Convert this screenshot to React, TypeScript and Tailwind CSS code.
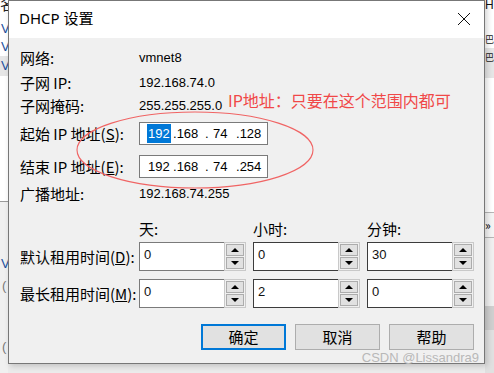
const latin = "font-['Liberation_Sans','Noto_Sans_CJK_SC',sans-serif]"

function Arrow({ up }: { up?: boolean }) {
  return (
    <div className="flex-1 border border-[#acacac] bg-[#e1e1e1] flex items-center justify-center">
      {up ? (
        <div className="w-0 h-0 border-x-[4px] border-x-transparent border-b-[4px] border-b-black" />
      ) : (
        <div className="w-0 h-0 border-x-[4px] border-x-transparent border-t-[4px] border-t-black" />
      )}
    </div>
  )
}

function Spin({ value, dark }: { value: string; dark?: boolean }) {
  return (
    <div className="flex h-[29px] w-[107px]">
      <div
        className={`flex-1 bg-white border pl-[4px] pt-[4px] text-[13px] leading-[16px] text-[#111] ${latin} ${
          dark ? 'border-[#3c3c3c]' : 'border-[#7a7a7a]'
        }`}
      >
        {value}
      </div>
      <div className="w-[22px] -ml-px border border-[#c9c9c9] bg-[#f0f0f0] p-px flex flex-col gap-px">
        <Arrow up />
        <Arrow />
      </div>
    </div>
  )
}

function Row({ label, children, className }: { label: React.ReactNode; children: React.ReactNode; className: string }) {
  return (
    <div className={`flex items-center ${className}`}>
      <div className="w-[119px] shrink-0 text-[15px] leading-[20px] whitespace-nowrap">{label}</div>
      {children}
    </div>
  )
}

function Value({ children }: { children: React.ReactNode }) {
  return <div className={`text-[13px] ${latin}`}>{children}</div>
}

function IpBox({ parts, selected }: { parts: string[]; selected?: boolean }) {
  return (
    <div className={`w-[129px] h-[23px] bg-white border border-[#7a7a7a] flex items-center pl-[7px] text-[13px] ${latin}`}>
      <span className="w-[23px] flex items-center">
        <span className={selected ? 'bg-[#0078d7] text-white pl-px pr-[1px]' : 'pl-px'}>{parts[0]}</span>
        {selected && <span className="w-px h-[17px] bg-[#f08020]" />}
      </span>
      <span className="w-[35px] pl-[3px]">.{parts[1]}</span>
      <span className="w-[8px]">.</span>
      <span className="w-[22px]">{parts[2]}</span>
      <span className="w-[30px] pl-px">.{parts[3]}</span>
    </div>
  )
}

function Btn({ children, primary }: { children: React.ReactNode; primary?: boolean }) {
  return (
    <div
      className={`w-[85px] h-[26px] bg-[#e1e1e1] flex items-center justify-center text-[15px] ${
        primary ? 'border-2 border-[#0078d7]' : 'border border-[#adadad]'
      }`}
    >
      {children}
    </div>
  )
}

function Backdrop() {
  return (
    <div className="flex h-full text-[15px] leading-[19px]">
      <div className="w-[8px] overflow-hidden flex flex-col bg-white">
        <div className="h-[12px] overflow-hidden leading-[8px] text-[#222]">名</div>
        <div className={`mt-[7px] h-[18px] pl-px text-[13px] text-[#1d4f9c] ${latin}`}>V</div>
        <div className={`h-[19px] pl-px text-[13px] text-[#1d4f9c] ${latin}`}>V</div>
        <div className={`h-[20px] pl-px bg-[#e6e6e6] text-[13px] text-[#1d4f9c] ${latin}`}>V</div>
        <div className="h-[125px]" />
        <div className="flex-1 border-t border-[#9a9a9a] bg-[#f0f0f0] flex flex-col">
          <div className={`mt-[52px] pl-px text-[13px] text-[#1d4f9c] ${latin}`}>V</div>
          <div className={`mt-[3px] pl-[2px] text-[13px] text-[#777] ${latin}`}>(</div>
          <div className={`mt-[42px] pl-[2px] text-[13px] text-[#777] ${latin}`}>(</div>
        </div>
      </div>
      <div className="flex-1 flex flex-col justify-end">
        <div className="h-[9px] bg-[#ebebeb]" />
      </div>
      <div className="w-[9px] overflow-hidden flex flex-col bg-white">
        <div className={`h-[14px] leading-[10px] text-[12px] text-[#111] ${latin}`}>H</div>
        <div className="mt-[16px] h-[18px] text-[9px] text-[#222]">巴</div>
        <div className="h-[30px] bg-[#e6e6e6] text-[9px] text-[#222]">巴</div>
        <div className="h-[134px]" />
        <div className="h-[26px] border-y border-[#b5b5b5] bg-[#f4f4f4] text-[12px] leading-[24px]">»</div>
        <div className="h-[68px] bg-[#f0f0f0]" />
        <div className="h-[24px] bg-[#cfcfcf]" />
        <div className="flex-1 bg-[#e0e0e0]" />
      </div>
    </div>
  )
}

export default function App() {
  return (
    <div className="relative w-[494px] h-[373px] overflow-hidden bg-white text-black font-['Noto_Sans_CJK_SC',sans-serif]">
      <Backdrop />

      <div className="absolute left-[8px] top-0 w-[477px] h-[364px] border border-[#777] flex flex-col shadow-[2px_2px_6px_rgba(0,0,0,0.18)]">
        <div className="h-[37px] bg-white flex items-center justify-between pl-[10px] pr-[13px]">
          <div className="text-[15px] font-['Noto_Sans','Noto_Sans_CJK_SC',sans-serif] pb-[2px]">DHCP 设置</div>
          <svg width="14" height="14" viewBox="0 0 14 14" className="mb-[2px]">
            <path d="M1 1L13 13M13 1L1 13" stroke="#111" strokeWidth="1" />
          </svg>
        </div>

        <div className="flex-1 bg-[#f0f0f0] pl-[11px] pr-[10px] pt-[10px] flex flex-col">
          <Row label="网络:" className="h-[20px]">
            <Value>vmnet8</Value>
          </Row>
          <Row label="子网 IP:" className="h-[20px] mt-[5px]">
            <Value>192.168.74.0</Value>
          </Row>
          <Row label="子网掩码:" className="h-[20px] mt-[3px]">
            <Value>255.255.255.0</Value>
          </Row>
          <Row
            label={
              <>
                起始 IP 地址(<span className="underline">S</span>):
              </>
            }
            className="h-[25px] mt-[5px]"
          >
            <IpBox parts={['192', '168', '74', '128']} selected />
          </Row>
          <Row
            label={
              <>
                结束 IP 地址(<span className="underline">E</span>):
              </>
            }
            className="h-[25px] mt-[8px]"
          >
            <IpBox parts={['192', '168', '74', '254']} />
          </Row>
          <Row label="广播地址:" className="h-[20px] mt-[5px]">
            <Value>192.168.74.255</Value>
          </Row>

          <div className="flex h-[20px] mt-[15px] pl-[119px] gap-[7px] text-[15px] leading-[20px]">
            <div className="w-[107px]">天:</div>
            <div className="w-[107px]">小时:</div>
            <div className="w-[107px]">分钟:</div>
          </div>

          <Row
            label={
              <>
                默认租用时间(<span className="underline">D</span>):
              </>
            }
            className="h-[29px] mt-[3px]"
          >
            <div className="flex gap-[7px]">
              <Spin value="0" />
              <Spin value="0" dark />
              <Spin value="30" dark />
            </div>
          </Row>
          <Row
            label={
              <>
                最长租用时间(<span className="underline">M</span>):
              </>
            }
            className="h-[29px] mt-[8px]"
          >
            <div className="flex gap-[7px]">
              <Spin value="0" />
              <Spin value="2" dark />
              <Spin value="0" dark />
            </div>
          </Row>

          <div className="flex justify-end gap-[9px] mt-[16px]">
            <Btn primary>确定</Btn>
            <Btn>取消</Btn>
            <Btn>帮助</Btn>
          </div>
        </div>
      </div>

      <svg className="absolute left-0 top-0 pointer-events-none" width="494" height="373">
        <ellipse cx="195" cy="150" rx="118" ry="38" fill="none" stroke="#f06464" strokeWidth="1.1" />
      </svg>
      <div className="absolute left-[228px] top-[89px] text-[16px] leading-[22px] text-[#f04848] whitespace-nowrap">
        IP地址：只要在这个范围内都可
      </div>
      <div className={`absolute right-[15px] top-[349px] text-[13px] leading-[18px] text-[#b8b8b8] ${latin}`}>
        CSDN @Lissandra9
      </div>
    </div>
  )
}
